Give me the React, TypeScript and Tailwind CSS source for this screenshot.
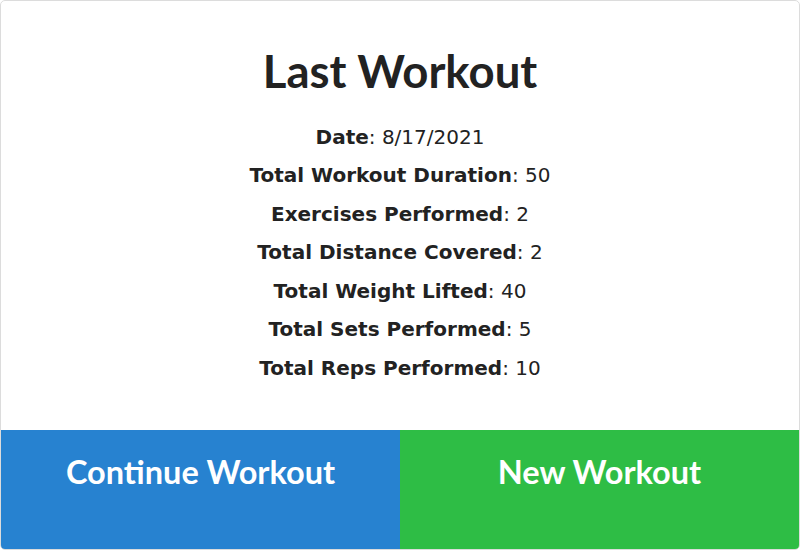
import React from 'react';

const stats: { label: string; value: string }[] = [
  { label: 'Date', value: '8/17/2021' },
  { label: 'Total Workout Duration', value: '50' },
  { label: 'Exercises Performed', value: '2' },
  { label: 'Total Distance Covered', value: '2' },
  { label: 'Total Weight Lifted', value: '40' },
  { label: 'Total Sets Performed', value: '5' },
  { label: 'Total Reps Performed', value: '10' },
];

const App: React.FC = () => {
  return (
    <div className="w-[800px] h-[550px] bg-white">
      <div className="w-[800px] h-[550px] flex flex-col border border-[#dcdcdc] rounded-[5px] overflow-hidden text-[#222]">
        {/* Summary */}
        <div className="flex-1 flex flex-col items-center">
          <h1 className="mt-[47px] text-[45.5px] leading-none font-bold font-['Lato',sans-serif]">Last Workout</h1>
          <div className="mt-[24px] flex flex-col items-center font-['DejaVu_Sans',sans-serif] text-[20px]">
            {stats.map((s) => (
              <div key={s.label} className="leading-[38.5px]">
                <span className="font-bold">{s.label}</span>: {s.value}
              </div>
            ))}
          </div>
        </div>

        {/* Actions */}
        <div className="grid grid-cols-2 h-[119px] font-['Lato',sans-serif] font-bold text-white text-[32.5px]">
          <button className="bg-[#2782d0] flex justify-center pt-[18px]">Continue Workout</button>
          <button className="bg-[#2ebd45] flex justify-center pt-[18px]">New Workout</button>
        </div>
      </div>
    </div>
  );
};

export default App;
